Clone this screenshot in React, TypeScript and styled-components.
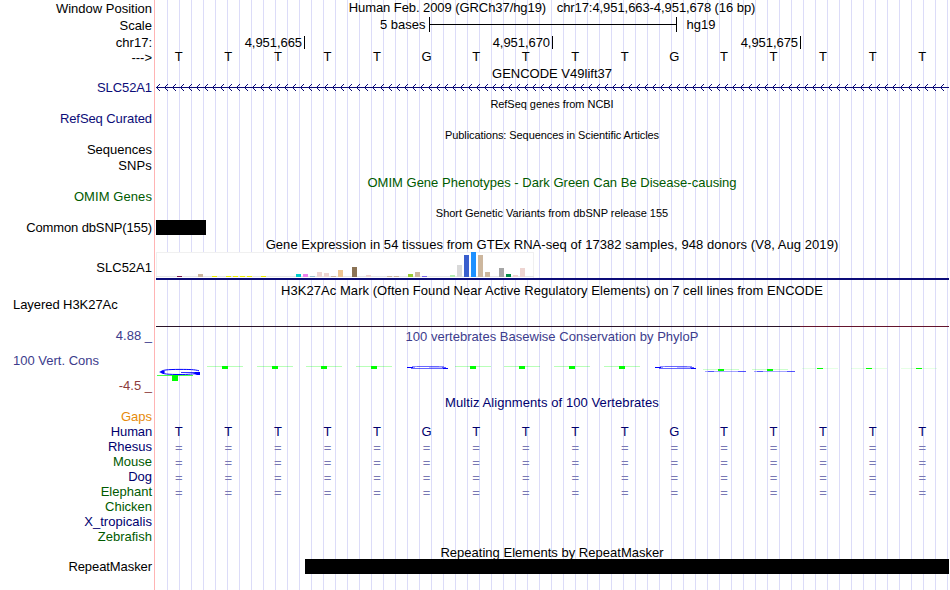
import styled, { createGlobalStyle } from 'styled-components';

const GlobalStyle = createGlobalStyle`
  body {
    margin: 0;
    background-color: #ffffff;
    overflow: hidden;
  }
`;

const Browser = styled.div`
  display: grid;
  grid-template-columns: 154px 796px;
  width: 950px;
  height: 590px;
  overflow: hidden;
  font-family: 'Liberation Sans', Arial, Helvetica, sans-serif;
  font-size: 13px;
  line-height: 15px;
  color: #000000;
  white-space: pre;
`;

const LabelColumn = styled.div`
  display: flex;
  flex-direction: column;
  padding: 1px 2px 0 13px;
`;

const Label = styled.div<{
  $gap?: number;
  $color?: string;
  $left?: boolean;
  $spacing?: number;
}>`
  height: 15px;
  flex: none;
  margin-top: ${({ $gap }) => $gap ?? 0}px;
  color: ${({ $color }) => $color ?? '#000000'};
  align-self: ${({ $left }) => ($left ? 'flex-start' : 'flex-end')};
  letter-spacing: ${({ $spacing }) => $spacing ?? 0}px;
`;

const Plot = styled.div`
  display: flex;
  flex-direction: column;
  border-left: 1px solid #ffb4b4;
  background:
    linear-gradient(#ffffff, #ffffff) 0 0 / 1px 100% no-repeat,
    repeating-linear-gradient(
      to right,
      #dcdcf8 0,
      #dcdcf8 1px,
      transparent 1px,
      transparent 12px
    );
`;

const Caption = styled.div<{
  $gap?: number;
  $color?: string;
  $small?: boolean;
  $spacing?: number;
}>`
  flex: none;
  width: 794px;
  margin-top: ${({ $gap }) => $gap ?? 0}px;
  text-align: center;
  color: ${({ $color }) => $color ?? '#000000'};
  font-size: ${({ $small }) => ($small ? 11 : 13)}px;
  height: ${({ $small }) => ($small ? 13 : 15)}px;
  line-height: ${({ $small }) => ($small ? 13 : 15)}px;
  letter-spacing: ${({ $spacing }) => $spacing ?? 0}px;
`;

const ScaleRow = styled.div`
  display: flex;
  flex: none;
  height: 15px;
  margin: 2px 0 0 225px;
`;

const ScaleBar = styled.div`
  display: flex;
  align-items: center;
  width: 246px;
  height: 15px;
  margin: 0 10px 0 3px;
  border: solid #000000;
  border-width: 0 1px;

  &::after {
    content: '';
    flex: 1;
    height: 1px;
    background-color: #000000;
  }
`;

const RulerRow = styled.div`
  display: flex;
  flex: none;
  height: 13px;
  margin-top: 4px;
  line-height: 13px;
`;

const Coordinate = styled.div<{ $width: number }>`
  box-sizing: border-box;
  width: ${({ $width }) => $width}px;
  padding-right: 2px;
  border-right: 1px solid #000000;
  text-align: right;
  letter-spacing: -0.06px;
`;

const BaseRow = styled.div<{ $gap?: number; $color?: string }>`
  display: grid;
  grid-template-columns: repeat(16, 1fr);
  flex: none;
  width: 793px;
  height: 15px;
  margin: ${({ $gap }) => $gap ?? 0}px 0 0 -1px;
  text-align: center;
  color: ${({ $color }) => $color ?? '#000000'};
`;

const Block = styled.div<{ $gap?: number; $start: number; $width: number }>`
  flex: none;
  width: ${({ $width }) => $width}px;
  height: 15px;
  margin: ${({ $gap }) => $gap ?? 0}px 0 0 ${({ $start }) => $start}px;
  background-color: #000000;
`;

const Drawing = styled.svg<{ $gap?: number }>`
  display: block;
  flex: none;
  margin-top: ${({ $gap }) => $gap ?? 0}px;
  margin-left: 1px;
`;

const Expression = styled.div`
  flex: none;
  width: 793px;
  height: 26px;
  margin-left: 1px;
  border-bottom: 2px solid #0c0c78;
`;

const ExpressionPanel = styled.div`
  box-sizing: border-box;
  width: 378px;
  height: 26px;
  background-color: #ffffff;
  border: 1px solid #f0f0f0;
  border-bottom: 0;

  svg {
    display: block;
    margin: -1px;
  }
`;

const SignalLine = styled.div`
  display: flex;
  flex: none;
  width: 793px;
  height: 1px;
  margin: 28px 0 0 1px;
  background: linear-gradient(to right, #2a1428 644px, #64142d 644px);
`;

const NAVY = '#0c0c78';
const BLUE = '#00006e';
const GREEN = '#005a00';

const labels = [
  { text: 'Window Position' },
  { text: 'Scale', gap: 2 },
  { text: 'chr17:', gap: 2 },
  { text: '--->' },
  { text: 'SLC52A1', gap: 15, color: NAVY, spacing: -0.1 },
  { text: 'RefSeq Curated', gap: 16, color: NAVY, spacing: -0.08 },
  { text: 'Sequences', gap: 16 },
  { text: 'SNPs', gap: 1, spacing: 0.15 },
  { text: 'OMIM Genes', gap: 16, color: GREEN, spacing: 0.08 },
  { text: 'Common dbSNP(155)', gap: 16, spacing: -0.12 },
  { text: 'SLC52A1', gap: 25 },
  { text: 'Layered H3K27Ac', gap: 22, left: true, spacing: -0.06 },
  { text: '4.88 _', gap: 16, color: '#3c3c8c' },
  { text: '100 Vert. Cons', gap: 10, color: '#3c3c8c', left: true },
  { text: '-4.5 _', gap: 10, color: '#8c3c3c' },
  { text: 'Gaps', gap: 16, color: '#e68a0a' },
  { text: 'Human', color: BLUE, spacing: -0.15 },
  { text: 'Rhesus', color: BLUE },
  { text: 'Mouse', color: GREEN },
  { text: 'Dog', color: BLUE },
  { text: 'Elephant', color: GREEN },
  { text: 'Chicken', color: GREEN },
  { text: 'X_tropicalis', color: BLUE, spacing: 0.05 },
  { text: 'Zebrafish', color: GREEN },
  { text: 'RepeatMasker', gap: 15, spacing: -0.08 },
];

const sequence = 'TTTTTGTTTTGTTTTT'.split('');
const alignedSpecies = ['rhesus', 'mouse', 'dog', 'elephant'];

// [tissue index, height, color]
const tissues: [number, number, string][] = [
  [3, 1, '#7a1a4a'],
  [6, 3, '#cdb79e'],
  [8, 1, '#eeee00'],
  [10, 1, '#eeee00'],
  [11, 1, '#eeee00'],
  [12, 1, '#eeee00'],
  [13, 1, '#eeee00'],
  [15, 1, '#eeee00'],
  [20, 3, '#00cdcd'],
  [21, 3, '#ee82ee'],
  [22, 1, '#9ac0cd'],
  [23, 5, '#eed5d2'],
  [24, 4, '#eed5d2'],
  [25, 1, '#cdb79e'],
  [26, 7, '#eec591'],
  [28, 10, '#8b7355'],
  [30, 2, '#eed5d2'],
  [33, 1, '#cdb79e'],
  [34, 1, '#cdb79e'],
  [36, 3, '#9acd32'],
  [37, 5, '#cdb79e'],
  [38, 1, '#7a67ee'],
  [42, 2, '#b4eeb4'],
  [43, 12, '#d9d9d9'],
  [44, 22, '#3a5fcd'],
  [45, 25, '#1e90ff'],
  [46, 22, '#cdb79e'],
  [47, 5, '#cdb79e'],
  [49, 9, '#a6a6a6'],
  [50, 3, '#008b45'],
  [51, 2, '#eed5d2'],
  [52, 9, '#eed5d2'],
];

// Conservation logo, x and y relative to the drawing: [x, y, stem height, bar opacity]
const thymines: [number, number, number, number][] = [
  [1, 15, 6, 0.7],
  [51, 6, 3, 0.28],
  [101, 6, 3, 0.28],
  [150, 6, 3, 0.28],
  [200, 6, 3, 0.28],
  [299, 6, 3, 0.28],
  [348, 6, 3, 0.28],
  [398, 6, 3, 0.28],
  [448, 6, 3, 0.28],
  [547, 9, 2, 0.2],
  [596, 9, 2, 0.2],
  [646, 8, 1, 0.1],
  [695, 8, 1, 0.1],
  [745, 8, 1, 0.1],
];

const GeneArrows = () => (
  <Drawing width={793} height={9} $gap={2}>
    <g shapeRendering="crispEdges" fill="none" stroke={NAVY}>
      <path d="M0 4.5H793" />
      {Array.from({ length: 99 }, (_, i) => (
        <path
          key={i}
          d={`M${i * 8 + 1} 3.5h1m0 -1h1m0 -1h1M${i * 8 + 1} 5.5h1m0 1h1m0 1h1`}
        />
      ))}
    </g>
  </Drawing>
);

const ExpressionChart = () => (
  <Expression>
    <ExpressionPanel>
      <svg width={378} height={26} shapeRendering="crispEdges">
        <rect x={0} y={24} width={378} height={1} fill="#e6e6e6" />
        {tissues.map(([index, height, color]) => (
          <rect
            key={index}
            x={index * 7}
            y={25 - height}
            width={5}
            height={height}
            fill={color}
          />
        ))}
      </svg>
    </ExpressionPanel>
  </Expression>
);

const ConservationLogo = () => (
  <Drawing width={793} height={26} $gap={16}>
    <path
      d="M43 10.8C39 9.5 33 9.4 24 9.4C12 9.4 5 10 5 12C5 14 13 14.5 24 14.5C32 14.5 38 14 42 13"
      fill="none"
      stroke="#0000ff"
      strokeWidth={1}
    />
    <path d="M3 12L6 10.8H8L9 12L8 13.2H6ZM39 12H44V15H41L38 14Z" fill="#0000ff" />
    <path d="M25 12.5H40" stroke="#0000ff" strokeWidth={0.8} />
    <g shapeRendering="crispEdges">
      {[251, 499].map((x) => (
        <g key={x} fill="#0000ff">
          <rect x={x + 5} y={6} width={32} height={1} opacity={0.45} />
          <rect x={x + 10} y={6} width={22} height={1} opacity={0.25} />
          <rect x={x} y={7} width={6} height={1} />
          <rect x={x + 6} y={7} width={2} height={1} opacity={0.4} />
          <rect x={x + 22} y={7} width={17} height={1} opacity={0.25} />
          <rect x={x + 35} y={7} width={4} height={1} opacity={0.5} />
          <rect x={x + 4} y={8} width={34} height={1} opacity={0.6} />
          <rect x={x + 36} y={8} width={5} height={1} />
        </g>
      ))}
      {thymines.map(([x, y, height, opacity]) => (
        <g key={x} fill="#00ff00">
          <rect x={x} y={y} width={36} height={1} opacity={opacity} />
          <rect x={x + 15} y={y} width={6} height={height} />
        </g>
      ))}
      {[549, 598].map((x) => (
        <g key={x} fill="#0000ff">
          <rect x={x} y={11} width={41} height={1} opacity={0.35} />
          <rect x={x + 3} y={11} width={6} height={1} opacity={0.5} />
          <rect x={x + 33} y={11} width={8} height={1} opacity={0.5} />
        </g>
      ))}
    </g>
  </Drawing>
);

const App = () => (
  <>
    <GlobalStyle />
    <Browser>
      <LabelColumn>
        {labels.map(({ text, gap, color, left, spacing }, index) => (
          <Label
            key={index}
            $gap={gap}
            $color={color}
            $left={left}
            $spacing={spacing}
          >
            {text}
          </Label>
        ))}
      </LabelColumn>
      <Plot>
        <Caption $spacing={-0.07}>
          {'Human Feb. 2009 (GRCh37/hg19)   chr17:4,951,663-4,951,678 (16 bp)'}
        </Caption>
        <ScaleRow>
          <span>5 bases</span>
          <ScaleBar />
          <span>hg19</span>
        </ScaleRow>
        <RulerRow>
          <Coordinate $width={150}>4,951,665</Coordinate>
          <Coordinate $width={248}>4,951,670</Coordinate>
          <Coordinate $width={248}>4,951,675</Coordinate>
        </RulerRow>
        <BaseRow>
          {sequence.map((base, index) => (
            <span key={index}>{base}</span>
          ))}
        </BaseRow>
        <Caption $gap={2}>GENCODE V49lift37</Caption>
        <GeneArrows />
        <Caption $small $gap={6} $spacing={-0.04}>
          RefSeq genes from NCBI
        </Caption>
        <Caption $small $gap={18} $spacing={-0.08}>
          Publications: Sequences in Scientific Articles
        </Caption>
        <Caption $gap={33} $color={GREEN} $spacing={0.01}>
          OMIM Gene Phenotypes - Dark Green Can Be Disease-causing
        </Caption>
        <Caption $small $gap={17} $spacing={-0.02}>
          Short Genetic Variants from dbSNP release 155
        </Caption>
        <Block $start={1} $width={50} />
        <Caption $gap={2} $spacing={0.06}>
          Gene Expression in 54 tissues from GTEx RNA-seq of 17382 samples, 948
          donors (V8, Aug 2019)
        </Caption>
        <ExpressionChart />
        <Caption $gap={3} $spacing={0.05}>
          H3K27Ac Mark (Often Found Near Active Regulatory Elements) on 7 cell
          lines from ENCODE
        </Caption>
        <SignalLine />
        <Caption $gap={2} $color="#3c3c8c" $spacing={0.02}>
          100 vertebrates Basewise Conservation by PhyloP
        </Caption>
        <ConservationLogo />
        <Caption $gap={9} $color={BLUE} $spacing={0.08}>
          Multiz Alignments of 100 Vertebrates
        </Caption>
        <BaseRow $gap={14} $color={BLUE}>
          {sequence.map((base, index) => (
            <span key={index}>{base}</span>
          ))}
        </BaseRow>
        {alignedSpecies.map((species, row) => (
          <BaseRow key={species} $gap={row === 0 ? 1 : 0} $color="#7878b4">
            {sequence.map((_, index) => (
              <span key={index}>=</span>
            ))}
          </BaseRow>
        ))}
        <Caption $gap={45} $spacing={0.02}>
          Repeating Elements by RepeatMasker
        </Caption>
        <Block $gap={-1} $start={150} $width={644} />
      </Plot>
    </Browser>
  </>
);

export default App;
